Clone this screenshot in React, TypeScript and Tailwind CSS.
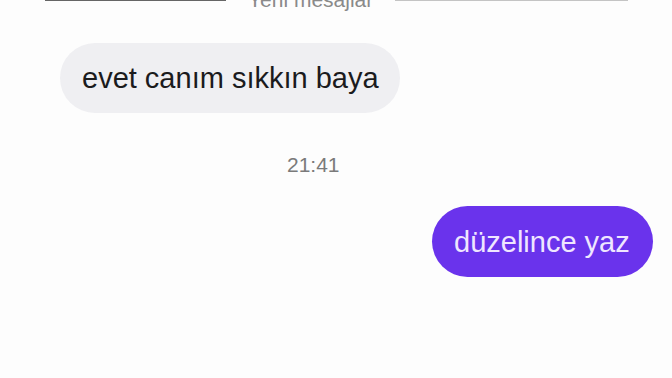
export default function App() {
  const font = { fontFamily: '"Liberation Sans", Arial, sans-serif' };
  return (
    <div className="w-[672px] h-[378px] overflow-hidden bg-[#fdfdfd]" style={font}>
      <div className="flex items-center mt-[-12px] h-[24px]">
        <div className="ml-[45px] w-[181px] h-[2px] bg-[#666666]" />
        <div className="ml-[22px] text-[21px] leading-[24px] text-[#8a8a8a] whitespace-nowrap">Yeni mesajlar</div>
        <div className="ml-[22px] w-[233px] h-[2px] bg-[#c4c4c4]" />
      </div>
      <div className="mt-[31px] ml-[60px] w-[340px] h-[70px] rounded-full bg-[#efeff2] flex items-center pl-[22px]">
        <span className="text-[29px] leading-[34px] text-[#1b1b1d] whitespace-nowrap">evet canım sıkkın baya</span>
      </div>
      <div className="mt-[40px] pl-[287px] text-[21px] leading-[24px] text-[#7a7a7a]">21:41</div>
      <div className="mt-[29px] ml-[432px] w-[221px] h-[71px] rounded-full bg-[#6a33ec] flex items-center pl-[22px]">
        <span className="text-[29px] leading-[34px] text-[#efe6ff] whitespace-nowrap">düzelince yaz</span>
      </div>
    </div>
  );
}
